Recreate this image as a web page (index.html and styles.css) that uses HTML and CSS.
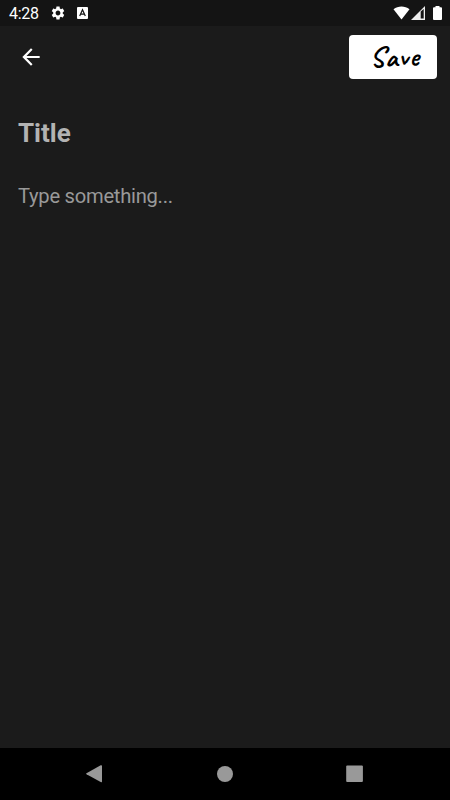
FILE: index.html
```html
<!DOCTYPE html>
<html lang="en">
<head>
    <meta charset="UTF-8">
    <meta name="viewport" content="width=device-width, initial-scale=1.0">
    <title>New note</title>
    <link rel="stylesheet" href="styles.css">
</head>

<body>
<div class="screen">
    <!-- Status bar -->
    <div class="status-bar">
        <span class="clock">4:28</span>
        <svg class="icon-gear" width="16" height="16" viewBox="0 0 24 24" fill="#fff">
            <path d="M19.14 12.94c.04-.3.06-.61.06-.94 0-.32-.02-.64-.07-.94l2.03-1.58c.18-.14.23-.41.12-.61l-1.92-3.32c-.12-.22-.37-.29-.59-.22l-2.39.96c-.5-.38-1.03-.7-1.62-.94l-.36-2.54c-.04-.24-.24-.41-.48-.41h-3.84c-.24 0-.43.17-.47.41l-.36 2.54c-.59.24-1.13.57-1.62.94l-2.39-.96c-.22-.08-.47 0-.59.22L2.74 8.87c-.12.21-.08.47.12.61l2.03 1.58c-.05.3-.09.63-.09.94s.02.64.07.94l-2.03 1.58c-.18.14-.23.41-.12.61l1.92 3.32c.12.22.37.29.59.22l2.39-.96c.5.38 1.03.7 1.62.94l.36 2.54c.05.24.24.41.48.41h3.84c.24 0 .44-.17.47-.41l.36-2.54c.59-.24 1.13-.56 1.62-.94l2.39.96c.22.08.47 0 .59-.22l1.92-3.32c.12-.22.07-.47-.12-.61l-2.01-1.58zM12 15.6c-1.98 0-3.6-1.62-3.6-3.6s1.62-3.6 3.6-3.6 3.6 1.62 3.6 3.6-1.62 3.6-3.6 3.6z"/>
        </svg>
        <svg class="icon-keyboard" width="11" height="12" viewBox="0 0 11 12">
            <rect width="11" height="12" rx="1" fill="#fff"/>
            <path d="M2.7 9 5.5 2.8 8.3 9M3.8 7.1h3.4" fill="none" stroke="#141414" stroke-width="1.2"/>
        </svg>
        <div class="status-right">
            <svg width="17" height="14" viewBox="0 0 17 14">
                <path d="M.5 3.3C5 -.4 12 -.4 16.5 3.3L8.5 13.5z" fill="#fff"/>
            </svg>
            <svg width="14" height="14" viewBox="0 0 14 14">
                <path d="M0 14 14 0v14z" fill="#eee"/>
                <path d="M9.7 5.5 12.7 3v9.5h-3z" fill="#141414"/>
            </svg>
            <svg class="icon-battery" width="9" height="14" viewBox="0 0 9 14">
                <path d="M2.5 0h4v1.3H8q1 0 1 1V13q0 1-1 1H1q-1 0-1-1V2.3q0-1 1-1h1.5z" fill="#fff"/>
            </svg>
        </div>
    </div>

    <!-- Toolbar -->
    <div class="toolbar">
        <svg class="back" width="26" height="26" viewBox="0 0 24 24">
            <path d="M20 11H7.83l5.59-5.59L12 4l-8 8 8 8 1.41-1.41L7.83 13H20v-2z" fill="#fff"/>
        </svg>
        <button class="save-button">Save</button>
    </div>

    <!-- Note -->
    <div class="note">
        <h1 class="note-title">Title</h1>
        <p class="note-body">Type something...</p>
    </div>

    <!-- Navigation bar -->
    <div class="nav-bar">
        <svg width="18" height="20" viewBox="0 0 18 20">
            <path d="M.5 9.3 14.7 1.3Q16 .8 16 2V17.5Q16 18.7 14.7 18L.5 10.3Q-.3 9.8.5 9.3z" fill="#999"/>
        </svg>
        <svg width="18" height="18" viewBox="0 0 18 18">
            <circle cx="9" cy="9" r="8" fill="#999"/>
        </svg>
        <svg width="18" height="18" viewBox="0 0 18 18">
            <rect x=".2" y=".5" width="16.7" height="16.5" rx="1" fill="#999"/>
        </svg>
    </div>
</div>
</body>
</html>
```

FILE: styles.css
```css
body {
    margin: 0;
    background-color: #1b1b1b;
    font-family: Roboto, sans-serif;
}
svg {
    display: block;
}
.screen {
    display: flex;
    flex-direction: column;
    height: 800px;
    width: 450px;
}
.status-bar {
    display: flex;
    align-items: center;
    height: 26px;
    padding: 0 8px 0 9px;
    background-color: #141414;
}
.clock {
    width: 41px;
    padding-top: 2px;
    font-size: 16px;
    line-height: 24px;
    letter-spacing: -0.3px;
    color: #fff;
}
.icon-keyboard {
    margin-left: 11px;
}
.status-right {
    display: flex;
    align-items: center;
    gap: 1px;
    margin-left: auto;
}
.icon-battery {
    margin-left: 7px;
}
.toolbar {
    display: flex;
    align-items: center;
    justify-content: space-between;
    height: 62px;
    padding: 0 13px 0 18px;
}
.back {
    margin-bottom: 1px;
}
.save-button {
    width: 88px;
    height: 44px;
    padding: 0 0 2px 4px;
    border: none;
    border-radius: 4px;
    background-color: #fff;
    color: #000;
    font-family: Caveat, cursive;
    font-size: 28px;
    font-weight: 700;
    letter-spacing: 1.5px;
}
.note {
    flex: 1;
    padding: 30px 18px 0;
}
.note-title {
    margin: 0;
    font-size: 26px;
    font-weight: 700;
    line-height: 30px;
    color: #b3b3b3;
}
.note-body {
    margin: 36px 0 0;
    font-size: 20.2px;
    line-height: 24px;
    letter-spacing: -0.27px;
    color: #999;
}
.nav-bar {
    display: flex;
    align-items: center;
    justify-content: space-between;
    height: 52px;
    padding: 0 86px;
    background-color: #000;
}
```
